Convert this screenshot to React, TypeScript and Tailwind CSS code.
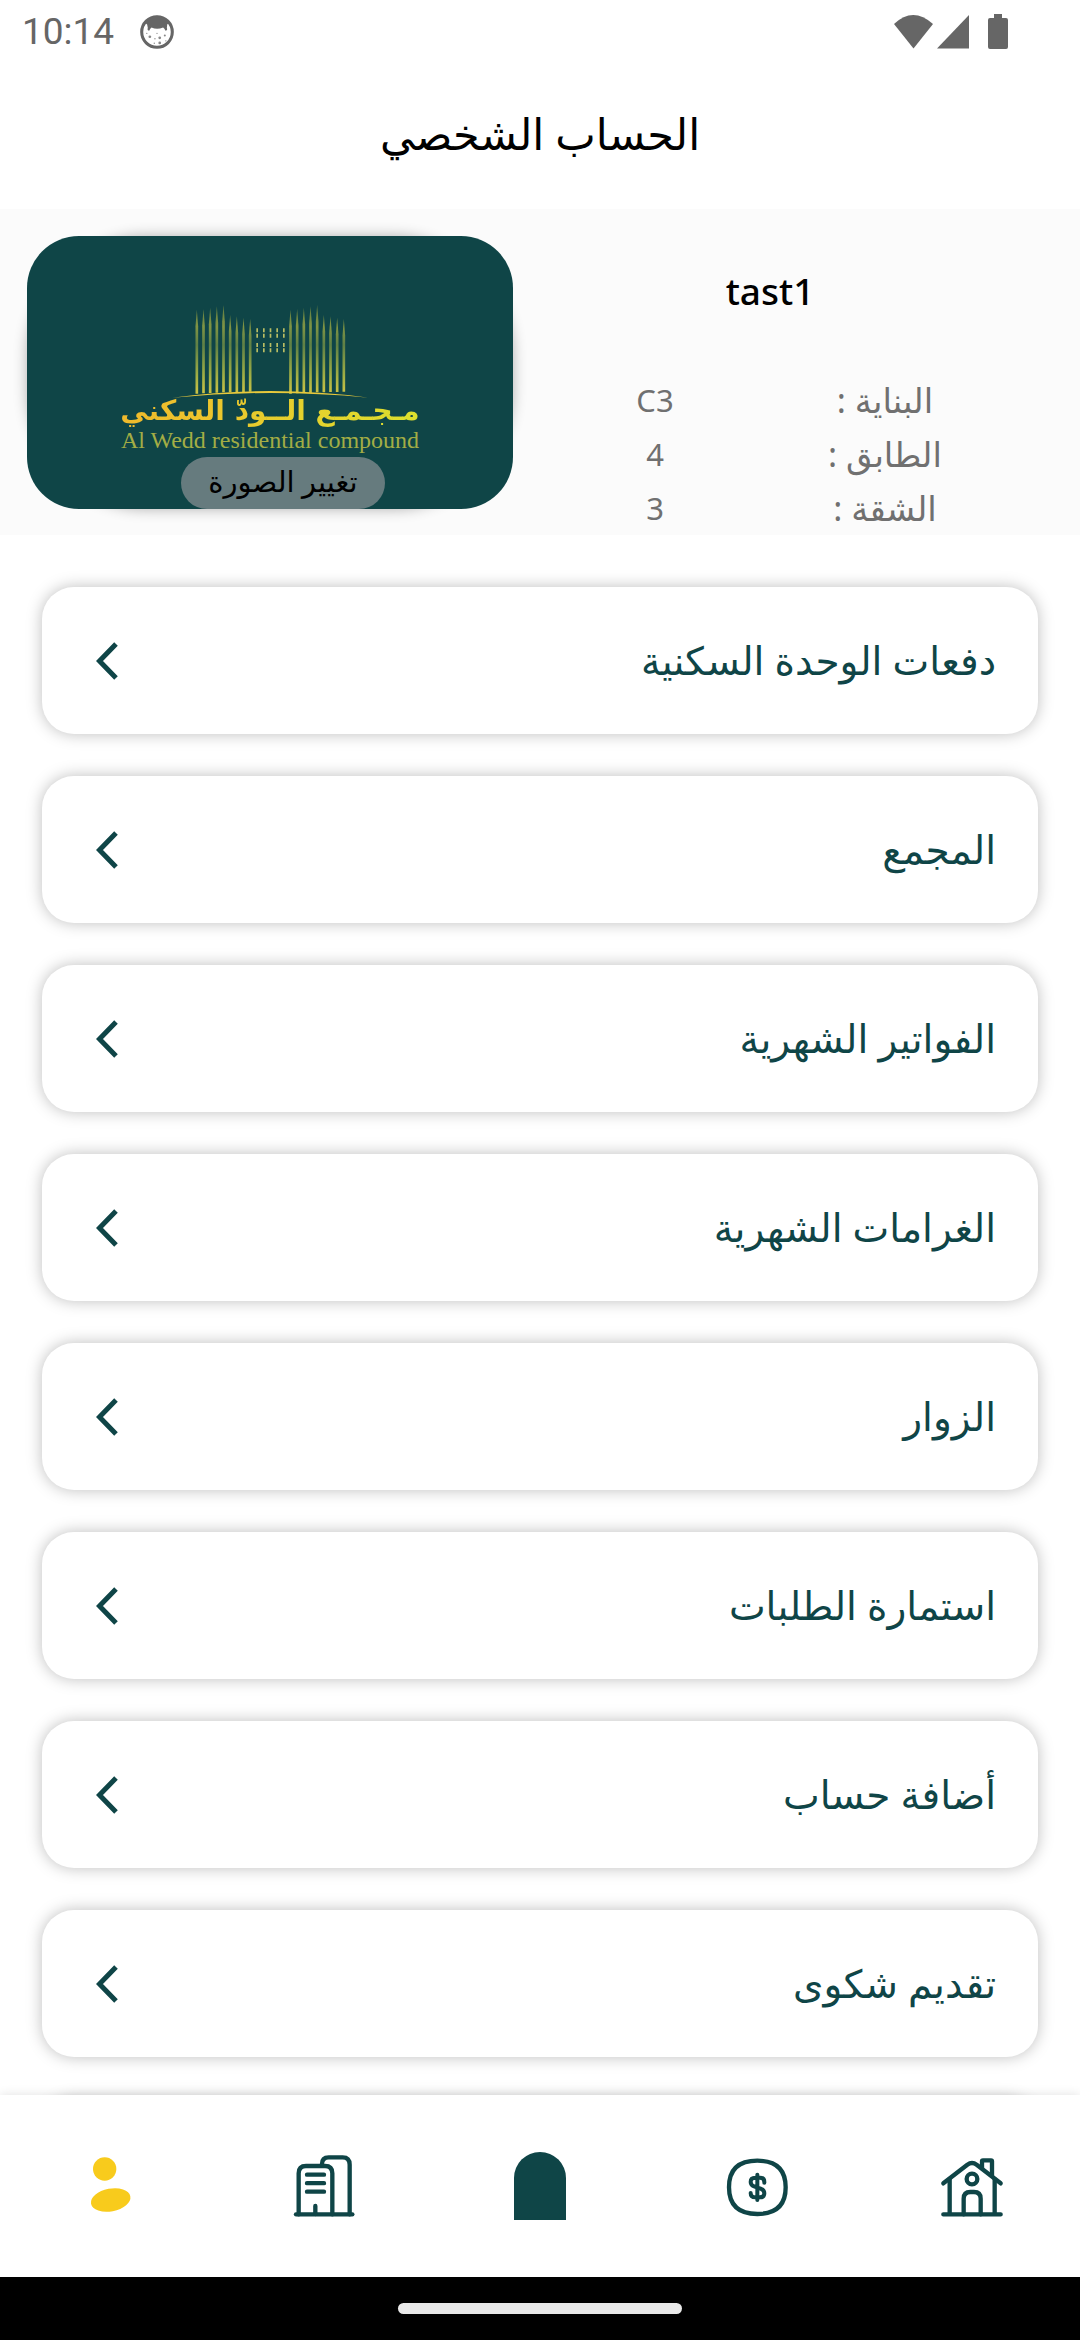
const menuItems = [
  'دفعات الوحدة السكنية',
  'المجمع',
  'الفواتير الشهرية',
  'الغرامات الشهرية',
  'الزوار',
  'استمارة الطلبات',
  'أضافة حساب',
  'تقديم شكوى',
];

const unitDetails = [
  { label: 'البناية :', value: 'C3' },
  { label: 'الطابق :', value: '4' },
  { label: 'الشقة :', value: '3' },
];

const towerBars = [
  { x: 0, top: 62, bottom: 314 },
  { x: 20, top: 60, bottom: 313 },
  { x: 40, top: 56, bottom: 312 },
  { x: 60, top: 52, bottom: 311 },
  { x: 80, top: 48, bottom: 310 },
  { x: 100, top: 78, bottom: 310 },
  { x: 120, top: 82, bottom: 309 },
  { x: 140, top: 86, bottom: 309 },
  { x: 160, top: 90, bottom: 308 },
];

function StatusBar() {
  return (
    <div dir="ltr" className="flex h-[63px] shrink-0 items-center justify-between pl-[22px] pr-[72px] text-[#666666]">
      <div className="flex items-center gap-[26px]">
        <span className="font-[Roboto] text-[37px] leading-[44px]">10:14</span>
        <svg viewBox="0 0 100 100" className="size-[34px]" aria-hidden="true">
          <circle cx="50" cy="50" r="45" fill="#fff" stroke="#666" strokeWidth="9" />
          <path d="M14 22Q50 -18 86 22L80 28L79 38Q82 46 75 46Q72 40 68 37Q50 44 34 37Q30 40 27 46Q20 46 23 38L21 28Z" fill="#666" />
          <g fill="#888">
            <circle cx="29" cy="64" r="4" />
            <circle cx="44" cy="70" r="2" />
            <circle cx="50" cy="54" r="2" />
            <circle cx="58" cy="67" r="4" />
            <circle cx="73" cy="60" r="3" />
            <circle cx="58" cy="82" r="4" />
            <circle cx="42" cy="83" r="2" />
            <circle cx="20" cy="54" r="2" />
            <circle cx="76" cy="76" r="2" />
          </g>
        </svg>
      </div>
      <div className="flex items-center">
        <svg viewBox="0 0 76 34" className="h-[34px] w-[76px]" fill="#666" aria-hidden="true">
          <path d="M0 9Q19 -9 39 9L19.500 33.500Z" />
          <path d="M43 33.500L75 0V33.500Z" />
        </svg>
        <svg viewBox="0 0 20 35" className="ml-[18px] h-[35px] w-5" fill="#666" aria-hidden="true">
          <path d="M6 0H14V4H18Q20 4 20 6V33Q20 35 18 35H2Q0 35 0 33V6Q0 4 2 4H6Z" />
        </svg>
      </div>
    </div>
  );
}

function CompoundLogo() {
  return (
    <div className="flex flex-col items-center pt-[68px]">
      <svg viewBox="215 45 590 285" className="h-[95px] w-[197px]" aria-hidden="true">
        <defs>
          <linearGradient id="bar" gradientUnits="userSpaceOnUse" x1="0" y1="45" x2="0" y2="318">
            <stop offset="0" stopColor="#5d7a44" />
            <stop offset="0.25" stopColor="#7f9444" />
            <stop offset="0.45" stopColor="#5f8046" />
            <stop offset="0.8" stopColor="#a3b044" />
            <stop offset="1" stopColor="#cfc445" />
          </linearGradient>
        </defs>
        <g fill="url(#bar)">
          {[289, 570].map((start) =>
            towerBars.map((bar) => {
              const x = start + bar.x;
              return (
                <path
                  key={x}
                  d={`M${x} ${bar.top}L${x + 4} ${bar.top + 50}V${bar.bottom}H${x - 4}V${bar.top + 50}Z`}
                />
              );
            }),
          )}
        </g>
        <g stroke="#b9bd63" strokeWidth="5" strokeDasharray="12 4">
          {[470, 490, 510, 530, 550].map((x) => (
            <path key={x} d={`M${x} 118V146M${x} 162V190`} />
          ))}
        </g>
        <path d="M215 326Q510 286 805 326Q510 298 215 326Z" fill="#e8c93c" />
      </svg>
      <span className="-mt-[3px] -mb-1 bg-linear-to-r from-[#f0b92c] to-[#dce02e] bg-clip-text pb-1 font-['DejaVu_Sans',sans-serif] text-[28px] leading-[30px] font-bold text-transparent">
        مـجـمـع الــودّ السكني
      </span>
      <span dir="ltr" className="font-['Liberation_Serif',serif] text-2xl leading-7 text-[#a3ad45]">
        Al Wedd residential compound
      </span>
    </div>
  );
}

function ProfileHeader() {
  return (
    <section dir="ltr" className="flex shrink-0 bg-[#fbfbfb] pt-[27px] pr-20 pl-[27px]">
      <div className="flex flex-1 pr-[27px]">
        <div className="h-[273px] w-full rounded-[120px] shadow-[0_0_14px_rgba(0,0,0,0.3)]">
          <div className="relative h-full overflow-hidden rounded-[52px] bg-[#0f4547]">
            <CompoundLogo />
            <div className="absolute inset-x-0 bottom-0 flex justify-center pl-[26px]">
              <button
                type="button"
                dir="rtl"
                className="h-[52px] w-[204px] rounded-full bg-[#667b7e] pb-1 text-[29px] leading-[48px] text-black"
              >
                تغيير الصورة
              </button>
            </div>
          </div>
        </div>
      </div>
      <div className="flex w-[460px] flex-col items-center">
        <h2 className="mt-7 text-[37px] leading-[54px] font-medium text-black">tast1</h2>
        <dl dir="rtl" className="mt-[55px] w-full text-[#707070]">
          {unitDetails.map((detail) => (
            <div key={detail.label} className="grid grid-cols-2 text-center leading-[54px]">
              <dt className="text-[34px]">{detail.label}</dt>
              <dd className="text-[31px]">{detail.value}</dd>
            </div>
          ))}
        </dl>
      </div>
    </section>
  );
}

function MenuList() {
  return (
    <ul className="flex min-h-0 flex-1 flex-col gap-[42px] overflow-y-auto px-[42px] pt-[52px] [scrollbar-width:none]">
      {menuItems.map((item) => (
        <li key={item} className="shrink-0">
          <button
            type="button"
            className="flex h-[147px] w-full items-center justify-between rounded-[32px] bg-white pr-[42px] pl-[54px] text-[39px] text-[#0f4547] shadow-[0_0_16px_rgba(0,0,0,0.26)]"
          >
            <span>{item}</span>
            <svg viewBox="0 0 22 38" className="h-[38px] w-[22px]" fill="none" stroke="currentColor" strokeWidth="5" aria-hidden="true">
              <path d="M20 2L3.500 19L20 36" />
            </svg>
          </button>
        </li>
      ))}
      <li aria-hidden="true" className="h-[147px] shrink-0 rounded-[32px] bg-white shadow-[0_0_16px_rgba(0,0,0,0.26)]" />
    </ul>
  );
}

function PersonIcon() {
  return (
    <svg viewBox="0 0 192 192" className="size-16" fill="#f8cb1c" aria-hidden="true">
      <circle cx="86" cy="45" r="35" />
      <ellipse cx="104" cy="138" rx="60" ry="34" transform="rotate(-11 104 138)" />
    </svg>
  );
}

function BuildingsIcon() {
  return (
    <svg viewBox="0 0 192 192" className="size-16" fill="none" stroke="#0f4547" strokeWidth="13" strokeLinecap="round" strokeLinejoin="round" aria-hidden="true">
      <path d="M12 181H181" />
      <path d="M20 181V58Q20 36 42 36H99Q121 36 121 58V181" />
      <path d="M90 32V30Q90 10 110 10H152Q173 10 173 32V181" />
      <path d="M45 62H96M45 87.500H96M45 113H96M70 156V180" />
    </svg>
  );
}

function DollarIcon() {
  return (
    <svg viewBox="0 0 192 192" className="size-16" fill="none" stroke="#0f4547" strokeWidth="13" strokeLinecap="round" strokeLinejoin="round" aria-hidden="true">
      <path d="M15 100C15 45 45 20 100 20C155 20 185 45 185 100C185 155 155 180 100 180C45 180 15 155 15 100Z" />
      <path strokeWidth="12" d="M100 62V138M121 86V84Q121 71 108 71H94Q80 71 80 84Q80 94 92 98L110 104Q121 108 121 118Q121 130 108 130H94Q80 130 80 117" />
    </svg>
  );
}

function HouseIcon() {
  return (
    <svg viewBox="0 0 192 192" className="size-16" fill="none" stroke="#0f4547" strokeWidth="13" strokeLinecap="round" strokeLinejoin="round" aria-hidden="true">
      <path d="M10 181H182M29 76V181M164 76V181" />
      <path d="M10 88L82 32Q96 22 110 32L182 88" />
      <path d="M126 42V22Q126 19 129 19H153Q156 19 156 22V66" />
      <circle cx="96" cy="75" r="16" />
      <path d="M71 181V134Q71 114 91 114H102Q122 114 122 134V181" />
    </svg>
  );
}

const tabs = [
  { name: 'الرئيسية', icon: <HouseIcon /> },
  { name: 'الدفعات', icon: <DollarIcon /> },
  { name: 'البوابة', icon: <span className="block h-[68px] w-[52px] rounded-t-full bg-[#0f4547]" /> },
  { name: 'المباني', icon: <BuildingsIcon /> },
  { name: 'الحساب', icon: <PersonIcon /> },
];

function BottomNav() {
  return (
    <nav className="relative flex h-[182px] shrink-0 items-center bg-white shadow-[0_0_10px_rgba(0,0,0,0.12)]">
      {tabs.map((tab) => (
        <button key={tab.name} type="button" aria-label={tab.name} className="flex h-full flex-1 items-center justify-center">
          {tab.icon}
        </button>
      ))}
    </nav>
  );
}

export default function App() {
  return (
    <div
      dir="rtl"
      className="flex h-dvh flex-col overflow-hidden bg-white font-['Noto_Sans','DejaVu_Sans',sans-serif]"
    >
      <StatusBar />
      <header className="flex h-[146px] shrink-0 items-center justify-center pb-1">
        <h1 className="text-[43px] font-medium text-black">الحساب الشخصي</h1>
      </header>
      <ProfileHeader />
      <MenuList />
      <BottomNav />
      <div className="relative flex h-[63px] shrink-0 items-center justify-center bg-black">
        <div className="h-[11px] w-[284px] rounded-full bg-[#e9e9e9]" />
      </div>
    </div>
  );
}
